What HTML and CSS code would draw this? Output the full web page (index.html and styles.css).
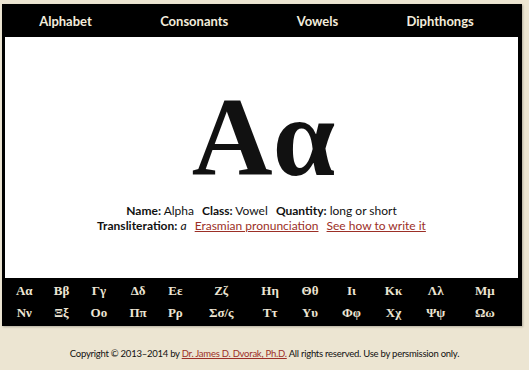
FILE: index.html
```html
<!DOCTYPE html>
<html>
<head>
<meta charset="utf-8">
<link rel="stylesheet" href="styles.css">
</head>
<body>
<div class="frame">
  <nav class="nav">
    <a class="nav-item">Alphabet</a>
    <a class="nav-item">Consonants</a>
    <a class="nav-item">Vowels</a>
    <a class="nav-item">Diphthongs</a>
  </nav>
  <main class="stage">
    <div class="glyph">Aα</div>
    <p class="info"><b>Name:</b> Alpha <span class="sep"></span><b>Class:</b> Vowel <span class="sep"></span><b>Quantity:</b> long or short</p>
    <p class="info"><b>Transliteration:</b> <i>a</i> <span class="sep"></span><a class="link">Erasmian pronunciation</a> <span class="sep"></span><a class="link">See how to write it</a></p>
  </main>
  <table class="letters">
    <tr>
      <td>Αα</td><td>Ββ</td><td>Γγ</td><td>Δδ</td><td>Εε</td><td>Ζζ</td><td>Ηη</td><td>Θθ</td><td>Ιι</td><td>Κκ</td><td>Λλ</td><td>Μμ</td>
    </tr>
    <tr>
      <td>Νν</td><td>Ξξ</td><td>Οο</td><td>Ππ</td><td>Ρρ</td><td>Σσ/ς</td><td>Ττ</td><td>Υυ</td><td>Φφ</td><td>Χχ</td><td>Ψψ</td><td>Ωω</td>
    </tr>
  </table>
</div>
<footer class="footer">Copyright © 2013–2014 by <a class="link">Dr. James D. Dvorak, Ph.D.</a> All rights reserved. Use by persmission only.</footer>
</body>
</html>
```
FILE: styles.css
```css
html, body {
  margin: 0;
  padding: 0;
}
body {
  background: #ece5d2;
  font-family: Lato, "Liberation Sans", sans-serif;
  color: #111;
  width: 529px;
  height: 370px;
  overflow: hidden;
}
.frame {
  margin: 4px 7px 0 2px;
  background: #000;
  padding: 0 4px 0 3px;
  box-shadow: 1px 1px 2px rgba(0,0,0,0.25);
}
.nav {
  height: 33px;
  display: flex;
  justify-content: space-around;
  align-items: center;
  padding-right: 10px;
}
.nav-item {
  color: #f3ecdc;
  font-weight: bold;
  font-size: 13px;
  text-decoration: none;
}
.stage {
  background: #fff;
  height: 241px;
  display: flex;
  flex-direction: column;
  align-items: center;
  padding-top: 44px;
  box-sizing: border-box;
}
.glyph {
  font-family: "Liberation Serif", serif;
  font-weight: bold;
  font-size: 112px;
  line-height: 1;
  margin-bottom: 10px;
  padding-left: 4px;
}
.info {
  margin: 0;
  font-size: 12px;
  line-height: 15px;
}
.sep {
  display: inline-block;
  width: 5px;
}
.link {
  color: #9c2f27;
  text-decoration: underline;
}
.letters {
  width: 100%;
  border-collapse: collapse;
  margin: 0;
  padding: 0;
}
.letters td {
  color: #ece5d3;
  font-family: "Liberation Serif", serif;
  font-weight: bold;
  font-size: 13px;
  text-align: center;
  height: 22px;
  padding: 0;
}
.letters tr:first-child td {
  padding-top: 2px;
}
.letters tr:last-child td {
  padding-bottom: 2px;
}
.letters td:last-child {
  padding-right: 6px;
}
.footer {
  text-align: center;
  font-size: 9.5px;
  letter-spacing: -0.25px;
  margin-top: 22px;
}
```
